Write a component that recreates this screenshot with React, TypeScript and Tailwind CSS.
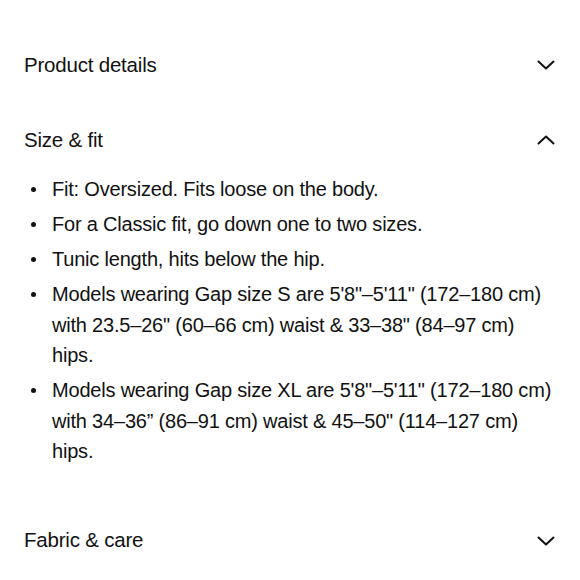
import React from "react";

const Chevron = ({ up = false }: { up?: boolean }) => (
  <svg width="18" height="10" viewBox="0 0 18 10" fill="none" className={up ? "rotate-180" : ""}>
    <polyline points="1.5,1.5 9,8.5 16.5,1.5" stroke="#111" strokeWidth="2" strokeLinecap="round" strokeLinejoin="round" />
  </svg>
);

const fitItems = [
  "Fit: Oversized. Fits loose on the body.",
  "For a Classic fit, go down one to two sizes.",
  "Tunic length, hits below the hip.",
  "Models wearing Gap size S are 5'8\"–5'11\" (172–180 cm) with 23.5–26\" (60–66 cm) waist & 33–38\" (84–97 cm) hips.",
  "Models wearing Gap size XL are 5'8\"–5'11\" (172–180 cm) with 34–36” (86–91 cm) waist & 45–50\" (114–127 cm) hips.",
];

const Header = ({ title, open }: { title: string; open?: boolean }) => (
  <div className="flex items-center justify-between h-[48px]">
    <span className="text-[20.5px] tracking-[-0.01em]">{title}</span>
    <span className="mr-[1px]">
      <Chevron up={open} />
    </span>
  </div>
);

export default function App() {
  return (
    <div className="w-[580px] h-[580px] bg-white text-[#111] px-6 pt-[41px] overflow-hidden" style={{ fontFamily: '"Liberation Sans", Arial, sans-serif' }}>
      <div className="mb-[27px]">
        <Header title="Product details" />
      </div>
      <div>
        <Header title="Size & fit" open />
        <ul className="mt-[10px] pb-[50px] flex flex-col gap-[4.5px]">
          {fitItems.map((item) => (
            <li key={item} className="flex text-[20px] leading-[30.5px] tracking-[-0.01em]">
              <span className="w-[28px] shrink-0 h-[30.5px] flex items-center">
                <span className="ml-[7px] w-[5px] h-[5px] rounded-full bg-[#111]" />
              </span>
              <span>{item}</span>
            </li>
          ))}
        </ul>
      </div>
      <Header title="Fabric & care" />
    </div>
  );
}
